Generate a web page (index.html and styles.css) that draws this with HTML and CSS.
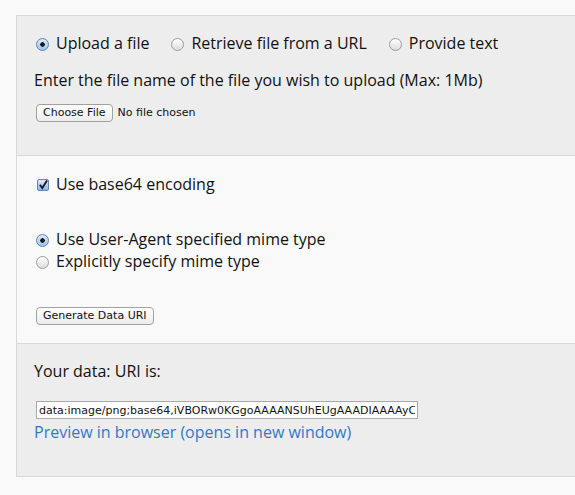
FILE: index.html
```html
<!DOCTYPE html>
<html lang="en">
<head>
  <meta charset="UTF-8" />
  <title>Data URI generator</title>
  <link rel="stylesheet" href="styles.css">
</head>
<body>
  <form class="panel">
    <div class="section shaded">
      <div class="choices">
        <label class="opt"><input type="radio" name="source" checked> Upload a file</label>
        <label class="opt"><input type="radio" name="source"> Retrieve file from a URL</label>
        <label class="opt"><input type="radio" name="source"> Provide text</label>
      </div>
      <p class="hint">Enter the file name of the file you wish to upload (Max: 1Mb)</p>
      <div class="file-row">
        <button type="button" class="btn">Choose File</button>
        <span class="file-name">No file chosen</span>
      </div>
    </div>

    <div class="section">
      <label class="opt line"><input type="checkbox" checked> Use base64 encoding</label>
      <div class="mime">
        <label class="opt line"><input type="radio" name="mime" checked> Use User-Agent specified mime type</label>
        <label class="opt line"><input type="radio" name="mime"> Explicitly specify mime type</label>
      </div>
      <button type="button" class="btn generate">Generate Data URI</button>
    </div>

    <div class="section shaded result">
      <p class="hint">Your data: URI is:</p>
      <input class="uri" type="text" readonly value="data:image/png;base64,iVBORw0KGgoAAAANSUhEUgAAADIAAAAyCAMAAAAp4XiDAAAAA1BMVEX///+nxBvIAAAAD0lEQVR4Ae3BAQEAAACCIP+vbkhAAQAAAAD">
      <a class="preview" href="#">Preview in browser (opens in new window)</a>
    </div>
  </form>
</body>
</html>
```

FILE: styles.css
```css
:root {
  --page: #f9f9f9;
  --shade: #ededed;
  --line: #d9d9d9;
  --text: #111;
  --link: #3578c6;
}

* {
  box-sizing: border-box;
}

body {
  margin: 0;
  padding-top: 15px;
  background: var(--page);
  color: var(--text);
  font-family: "Open Sans", sans-serif;
  font-size: 16px;
  line-height: 22px;
}

.panel {
  margin: 0 0 0 16px;
  border: 1px solid var(--line);
  border-right: 0;
}

.section {
  padding: 17px 0 18px 17px;
  background: var(--page);
}

.section + .section {
  border-top: 1px solid var(--line);
}

.section.shaded {
  background: var(--shade);
}

.section:first-child {
  padding: 16px 0 33px 17px;
}

p {
  margin: 0;
}

.choices {
  display: flex;
  gap: 20px;
}

.opt {
  display: flex;
  align-items: center;
  gap: 7px;
}

.hint {
  margin-top: 15px;
}

.result .hint {
  margin-top: 0;
}

/* aqua-like radio buttons and checkbox */
input[type="radio"],
input[type="checkbox"] {
  appearance: none;
  margin: 2px 0 0 2px;
  width: 13px;
  height: 13px;
  border: 1px solid #9c9c9c;
  background: linear-gradient(#ffffff, #dcdcdc);
  flex: none;
}

input[type="radio"] {
  border-radius: 50%;
}

input[type="radio"]:checked {
  border-color: #5d86b3;
  background:
    radial-gradient(circle, #1a1a1a 0 2px, transparent 2.5px),
    linear-gradient(#dcebfa, #9cc3ec);
}

input[type="checkbox"] {
  width: 12px;
  height: 12px;
  border-radius: 2px;
  margin-left: 3px;
}

input[type="checkbox"]:checked {
  border-color: #5d86b3;
  background:
    url("data:image/svg+xml,%3Csvg xmlns='http://www.w3.org/2000/svg' viewBox='0 0 12 12'%3E%3Cpath d='M2.5 5.5 L5 9 L10 1' fill='none' stroke='%23151c2c' stroke-width='2'/%3E%3C/svg%3E") center / 11px 11px no-repeat,
    linear-gradient(#dcebfa, #8cb7e6);
}

.file-row {
  margin-top: 13px;
  display: flex;
  align-items: center;
  gap: 5px;
  height: 18px;
  font-family: "DejaVu Sans", sans-serif;
  font-size: 11px;
  line-height: 18px;
}

.btn {
  margin-left: 2px;
  height: 18px;
  padding: 0 6px;
  border: 1px solid #a0a0a0;
  border-radius: 4px;
  background: linear-gradient(#ffffff, #ececec);
  color: #111;
  font-family: "DejaVu Sans", sans-serif;
  font-size: 11px;
  line-height: 16px;
}

.mime {
  margin-top: 33px;
}

.line {
  height: 22px;
}

.generate {
  display: block;
  margin-top: 35px;
}

.result {
  padding: 16px 0 33px 17px;
}

.uri {
  display: block;
  margin: 19px 0 0 2px;
  width: 382px;
  height: 18px;
  padding: 0 2px;
  border: 1px solid #a9a9a9;
  background: #fff;
  color: #111;
  font-family: "DejaVu Sans", sans-serif;
  font-size: 11px;
  outline: none;
}

.preview {
  display: block;
  margin-top: 2px;
  color: var(--link);
  text-decoration: none;
}
```
